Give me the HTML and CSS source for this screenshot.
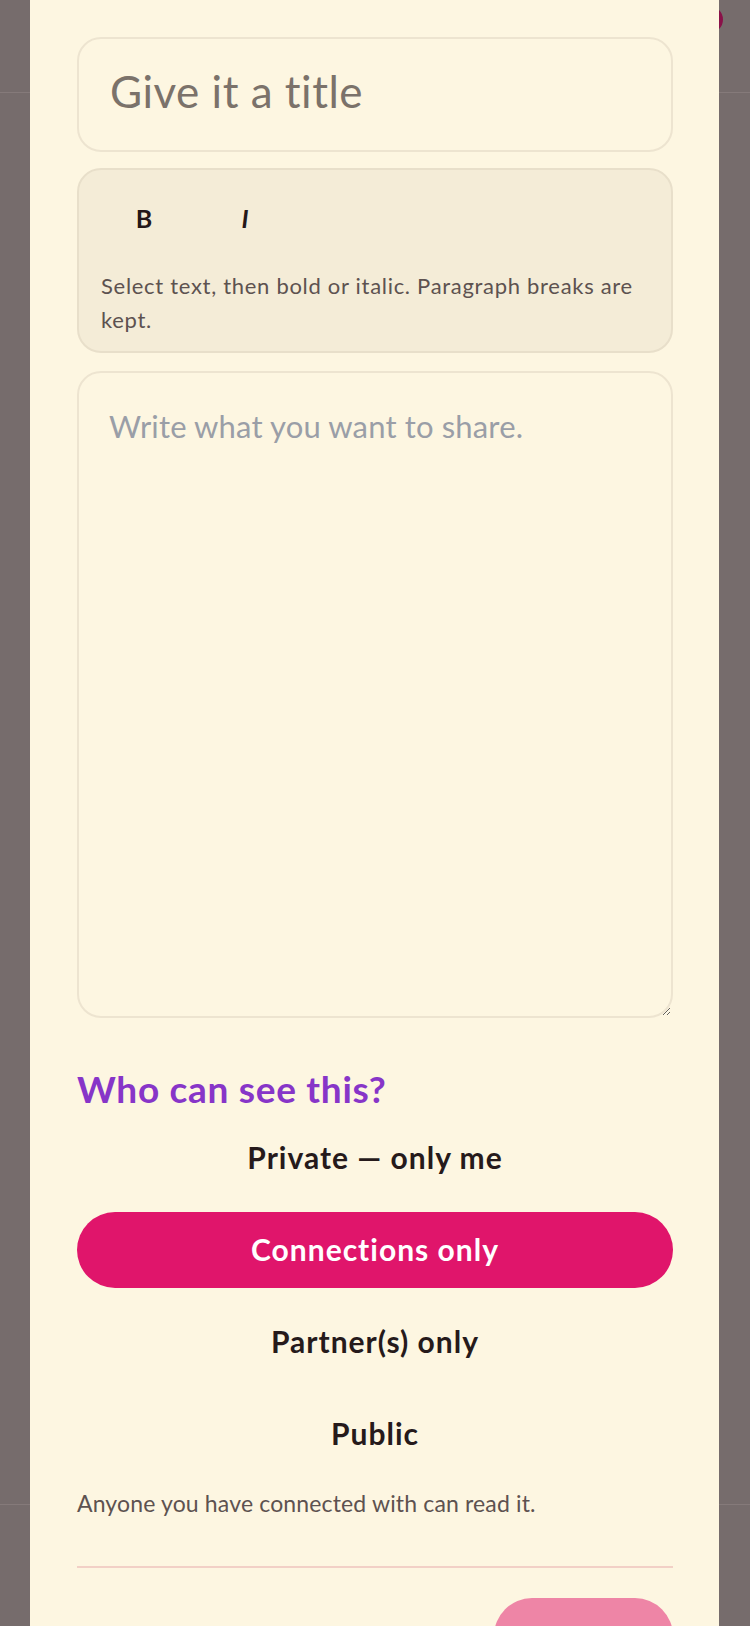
FILE: index.html
```html
<!DOCTYPE html>
<html>

<head>
	<link rel="stylesheet" href="styles.css">
</head>

<body>
	<div class="page">
		<header class="page-head">
			<span class="avatar"></span>
		</header>
		<main class="page-main"></main>
		<footer class="page-foot"></footer>
	</div>

	<div class="overlay">
		<div class="modal">
			<form class="compose">
				<input type="text" class="title-input" name="title" placeholder="Give it a title">

				<div class="format-bar">
					<div class="format-buttons">
						<button type="button" class="fmt fmt-bold">B</button>
						<button type="button" class="fmt fmt-italic">I</button>
					</div>
					<p class="format-help">Select text, then bold or italic. Paragraph breaks are kept.</p>
				</div>

				<textarea class="body-input" name="body" placeholder="Write what you want to share."></textarea>

				<section class="visibility">
					<h3>Who can see this?</h3>
					<div class="vis-options">
						<button type="button" class="vis">Private — only me</button>
						<button type="button" class="vis is-selected">Connections only</button>
						<button type="button" class="vis">Partner(s) only</button>
						<button type="button" class="vis">Public</button>
					</div>
					<p class="vis-note">Anyone you have connected with can read it.</p>
				</section>

				<div class="actions">
					<button type="submit" class="post-btn" disabled>Post</button>
				</div>
			</form>
		</div>
	</div>
</body>

</html>
```

FILE: styles.css
```css
body {
	margin: 0;
	width: 750px;
	height: 1626px;
	overflow: hidden;
	background: #766c6c;
	font-family: Lato, "Noto Sans", sans-serif;
}

.page {
	display: flex;
	flex-direction: column;
	height: 1626px;
}

.page-head {
	position: relative;
	height: 92px;
	border-bottom: 1px solid #857a7a;
}

.avatar {
	position: absolute;
	left: 696px;
	top: 6px;
	width: 27px;
	height: 27px;
	border-radius: 50%;
	background: #8a1149;
}

.page-main {
	flex: 1;
}

.page-foot {
	height: 121px;
	border-top: 1px solid #857a7a;
}

.overlay {
	position: fixed;
	inset: 0;
}

.modal {
	margin-left: 30px;
	width: 689px;
	height: 1626px;
	overflow: hidden;
	background: #fdf6e1;
	box-sizing: border-box;
	padding: 37px 46px 0 47px;
}

.compose {
	display: flex;
	flex-direction: column;
}

.title-input {
	height: 115px;
	box-sizing: border-box;
	border: 2px solid #ede4d0;
	border-radius: 24px;
	background: #fdf6e1;
	padding: 0 31px 8px;
	font-family: inherit;
	font-size: 44px;
	letter-spacing: 0.5px;
	color: #2a1e1e;
	outline: none;
}

.title-input::placeholder {
	color: #7b726a;
}

.format-bar {
	margin-top: 16px;
	background: #f4ecd7;
	border: 2px solid #e8dfca;
	border-radius: 24px;
	padding: 22px 22px 14px;
}

.format-buttons {
	display: flex;
	gap: 15px;
}

.fmt {
	width: 86px;
	height: 52px;
	border: none;
	background: transparent;
	font-family: inherit;
	font-size: 25px;
	font-weight: 700;
	color: #241819;
	padding: 0;
}

.fmt-italic {
	font-style: italic;
}

.format-help {
	margin: 25px 0 0;
	font-size: 22px;
	letter-spacing: 0.7px;
	line-height: 34px;
	color: #5d5250;
}

.body-input {
	margin-top: 18px;
	height: 647px;
	box-sizing: border-box;
	border: 2px solid #ede4d0;
	border-radius: 24px;
	background: #fdf6e1;
	padding: 34px 30px;
	font-family: Lato, sans-serif;
	font-size: 31px;
	letter-spacing: 0.15px;
	color: #2a1e1e;
	outline: none;
}

.body-input::placeholder {
	color: #9a9ea7;
}

.visibility {
	margin-top: 49px;
}

.visibility h3 {
	margin: 0;
	font-size: 37px;
	letter-spacing: 0.7px;
	line-height: 43px;
	font-weight: 700;
	color: #8735c8;
}

.vis-options {
	margin-top: 10px;
	display: flex;
	flex-direction: column;
	gap: 16px;
}

.vis {
	height: 76px;
	border: none;
	border-radius: 38px;
	background: transparent;
	padding: 0 0 3px;
	font-family: inherit;
	font-size: 30px;
	letter-spacing: 1px;
	font-weight: 700;
	color: #261a1b;
}

.vis.is-selected {
	background: #e0156b;
	color: #fff;
}

.vis-note {
	margin: 16px 0 0;
	font-size: 23px;
	letter-spacing: 0.15px;
	line-height: 30px;
	color: #5d5250;
}

.actions {
	margin-top: 48px;
	border-top: 2px solid #f2d0c6;
	padding-top: 30px;
	display: flex;
	justify-content: flex-end;
}

.post-btn {
	width: 179px;
	height: 76px;
	border: none;
	border-radius: 38px;
	background: #ee85a6;
	color: #fff;
	font-family: inherit;
	font-size: 28px;
	font-weight: 700;
}
```
